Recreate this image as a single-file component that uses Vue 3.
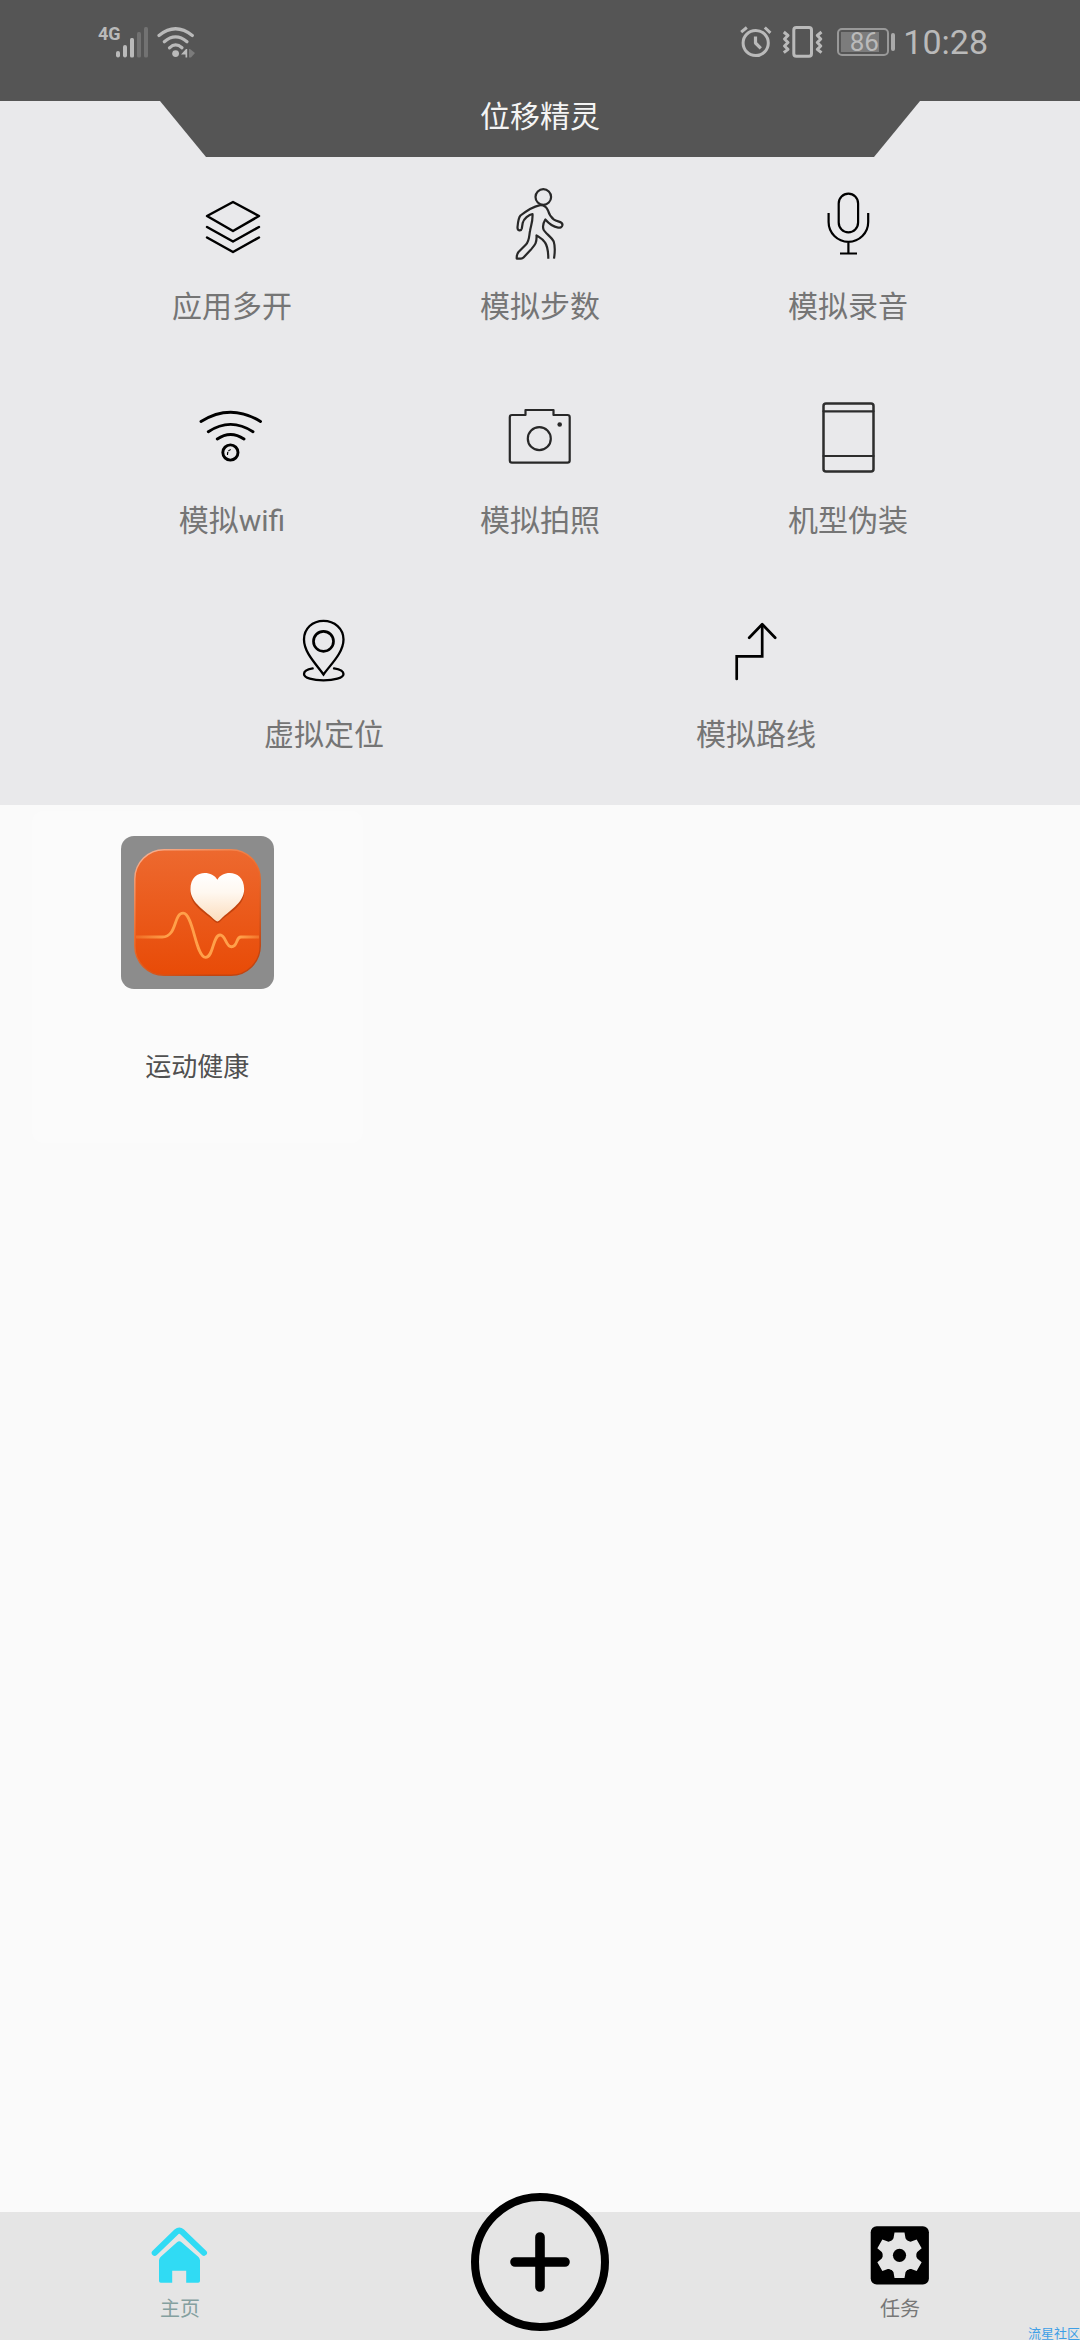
<script setup>
const rows = [
  [
    { id: 'layers', label: '应用多开' },
    { id: 'walk', label: '模拟步数' },
    { id: 'mic', label: '模拟录音' },
  ],
  [
    { id: 'wifi', label: '模拟wifi' },
    { id: 'camera', label: '模拟拍照' },
    { id: 'phone', label: '机型伪装' },
  ],
  [
    { id: 'pin', label: '虚拟定位' },
    { id: 'route', label: '模拟路线' },
  ],
]
const gearTeeth = [0, 60, 120, 180, 240, 300]
</script>

<template>
  <div class="page">
    <header class="top">
      <div class="status">
        <span class="network">4G</span>
        <svg class="signal" width="34" height="36" viewBox="116 24 34 36" aria-hidden="true">
          <g fill="#bababa">
            <rect x="116" y="51" width="4" height="6.500" rx="2" />
            <rect x="123" y="45" width="4" height="12.500" rx="2" />
            <rect x="130" y="38" width="4" height="19.500" rx="1.500" />
          </g>
          <g fill="#727272">
            <rect x="137" y="32" width="4" height="25.500" rx="1.500" />
            <rect x="144" y="27" width="4" height="30.500" rx="1.500" />
          </g>
        </svg>
        <svg width="42" height="36" viewBox="155 24 42 36" aria-hidden="true">
          <g fill="none" stroke="#bababa" stroke-width="3.200" stroke-linecap="round">
            <path d="M159 35.500Q175.500 22 192.300 35.500" />
            <path d="M164.300 41.800Q175.500 32 187 41.800" />
            <path d="M169.500 47.800Q175.600 42 182 47.800" />
          </g>
          <circle cx="175.600" cy="53.600" r="3.400" fill="#bababa" />
          <path d="M181 54.500l5-5.500h1.200v8.500h-1.700v-3z" fill="#bababa" />
          <path d="M189 49h1l5 4-4 4.500h-2z" fill="#7b7b7b" />
        </svg>

        <div class="status-right">
          <svg width="34" height="36" viewBox="740 24 34 36" aria-hidden="true">
            <g fill="none" stroke="#bababa" stroke-width="3">
              <circle cx="755.700" cy="43" r="12.600" />
              <path d="M755.500 36.500v6.500l5.300 5.300" stroke-width="3.200" stroke-linejoin="round" />
              <path d="M741.200 32.200l5.600-4.700M764.800 27.500l5.600 5.300" />
            </g>
          </svg>
          <svg class="vibrate" width="42" height="36" viewBox="782 24 42 36" aria-hidden="true">
            <g fill="none" stroke="#bababa" stroke-width="3" stroke-linejoin="round">
              <rect x="793.800" y="27.500" width="17.700" height="28.700" rx="2.500" />
              <path d="M783.800 32l4.200 3.500-3.500 3.500 3.500 3.500-3.500 3.500 3.500 3.300-4.200 3.400" />
              <path d="M821.500 32l-4.200 3.500 3.500 3.500-3.500 3.500 3.500 3.500-3.500 3.300 4.200 3.400" />
            </g>
          </svg>
          <span class="battery">86</span>
          <span class="nub"></span>
          <time class="clock">10:28</time>
        </div>
      </div>
    </header>

    <section class="panel">
      <h1 class="title">位移精灵</h1>
      <div v-for="(row, i) in rows" :key="i" class="row" :class="{ pair: row.length === 2 }">
        <button v-for="item in row" :key="item.id" type="button" class="feature">
          <svg
            width="84"
            height="84"
            viewBox="0 0 84 84"
            fill="none"
            stroke="#000"
            stroke-width="2.500"
            stroke-linecap="round"
            stroke-linejoin="round"
            aria-hidden="true"
          >
            <g v-if="item.id === 'layers'">
              <path d="M43 21L69 35 43 50 17 35zM17 46l26 14.500L69 46M17 56.500L43 71l26-14.500" />
            </g>
            <g v-else-if="item.id === 'walk'" stroke="#282828" stroke-width="2.200">
              <circle cx="45.300" cy="16" r="7.800" />
              <path
                stroke-linecap="butt"
                d="M50.300 77.700C50.300 70 49.500 65 47 61.500C44.500 57.500 41 56 38.500 54.300C39 62 37 64 33 68.500L25.500 76.500Q24.500 77.600 23 77.600H18.700C18.700 74.500 18.500 73.500 20.500 71L28 63.500C31.500 60 31 55 32 50C33 44 35 40 34.500 33C31 33.500 25.500 38 24.700 42L23.800 47.500C23 50.500 19.500 50 19.500 46.500C19.800 43 20 37.500 22.500 34.500C27 31 35 25.500 41.300 24.300C45.500 23.600 48.500 26 50 29.500C51 33 52.500 36 56 38.700C59.500 41 64.700 40.300 64.500 44C64 48.500 57 46.300 53.500 44C50.500 42 49 40.500 47.300 38.500C45.500 41.500 44.500 45.500 45.500 48.500C46.500 51.500 54 56.500 55.700 60.500C57 64.500 57 71 56 77.700"
              />
            </g>
            <g v-else-if="item.id === 'mic'" stroke-width="2.200" stroke-linecap="butt">
              <rect x="32.700" y="12.700" width="19.400" height="38.600" rx="9.700" />
              <path d="M22.600 32v9a19.800 19.800 0 0 0 39.600 0v-9M42.400 61v11.500M34 72.500h17" />
            </g>
            <g v-else-if="item.id === 'wifi'" stroke-width="2.900">
              <path d="M11 26.500Q40.500 8 70.500 26.500M18.300 36.700Q40.500 22 63 36.700M27.300 44Q40.500 35 54 44" />
              <circle cx="40.400" cy="57.500" r="7.600" />
              <path d="M37.500 59.500q0-5 5-5" stroke-width="1.200" stroke-dasharray="2 2" />
            </g>
            <g v-else-if="item.id === 'camera'" stroke="#282828" stroke-width="2.200">
              <path d="M14 20h13.500v-5h28v5H69.500q2.200 0 2.200 2.200V65.500q0 2.200-2.200 2.200H14q-2.200 0-2.200-2.200V22.200Q11.800 20 14 20z" />
              <circle cx="41.300" cy="43.700" r="11.500" />
              <circle cx="61.700" cy="29.500" r="2.300" fill="#282828" stroke="none" />
            </g>
            <g v-else-if="item.id === 'phone'" stroke="#2d2d2d" stroke-width="2.500">
              <rect x="17.500" y="8.500" width="50" height="68" rx="2.500" />
              <path d="M17.500 16.300h50M17.500 61h50" stroke-width="2.200" />
            </g>
            <g v-else-if="item.id === 'pin'" stroke-width="2.300">
              <path
                stroke-linejoin="miter"
                d="M41.500 65.500C35 56 22 44 22 30.500C22 19.500 30.500 11.800 41.500 11.800S61.500 19.500 61.500 30.500C61.500 44 48 56 41.500 65.500z"
              />
              <circle cx="41.500" cy="32.300" r="10" stroke-width="2.700" />
              <path d="M30.700 59.400C25 60.300 22 62.500 22 65C22 69 31 71.400 41.500 71.400S61.500 69 61.500 65C61.500 62.500 58 60.300 52 59.400" />
            </g>
            <g v-else stroke-width="2.700">
              <path stroke-linejoin="miter" d="M48.200 16v31.400H22.700V70" />
              <path d="M35.200 28.700l13-13.500 13 13.500" />
            </g>
          </svg>
          <span class="feature-label">{{ item.label }}</span>
        </button>
      </div>
    </section>

    <main class="apps">
      <button type="button" class="app">
        <span class="app-tile">
          <svg width="127" height="127" viewBox="0 0 126 126" aria-hidden="true">
            <defs>
              <linearGradient id="tile" x1="0" y1="0" x2="0" y2="1">
                <stop offset="0" stop-color="#ed692f" />
                <stop offset="1" stop-color="#e84b07" />
              </linearGradient>
              <linearGradient id="edge" x1="0" y1="0" x2="0.600" y2="1">
                <stop offset="0" stop-color="#f7b79c" />
                <stop offset="0.500" stop-color="#f0702f" />
                <stop offset="1" stop-color="#c24410" />
              </linearGradient>
              <linearGradient id="heart" x1="0" y1="0" x2="0" y2="1">
                <stop offset="0" stop-color="#ffffff" />
                <stop offset="0.400" stop-color="#fff8f0" />
                <stop offset="1" stop-color="#fbdcbc" />
              </linearGradient>
              <linearGradient id="pulse" gradientUnits="userSpaceOnUse" x1="2" y1="0" x2="124" y2="0">
                <stop offset="0" stop-color="#ffa04a" stop-opacity="0.300" />
                <stop offset="0.250" stop-color="#ffa04a" />
                <stop offset="0.850" stop-color="#ffa04a" />
                <stop offset="1" stop-color="#ffa04a" stop-opacity="0.400" />
              </linearGradient>
            </defs>
            <rect x="0.800" y="0.800" width="124.400" height="124.400" rx="29" fill="url(#tile)" stroke="url(#edge)" stroke-width="1.400" />
            <path
              d="M82.700 32.500C78 24 56 22 56 43C56 57 72 64 80.500 72.500Q82.700 74.500 85 72.500C93 64 109.300 57 109.300 43C109.300 24 87 24 82.700 32.500z"
              fill="#a93305"
              opacity="0.600"
            />
            <path
              d="M82.700 30.500C77 20.500 56 20.500 56 40C56 54 72 62 80.500 70.800Q82.700 73 85 70.800C93 62 109.300 54 109.300 40C109.300 20.500 88 20.500 82.700 30.500z"
              fill="url(#heart)"
            />
            <path
              d="M2 87.300H28C43 87.300 39 63.700 48.700 63.700C59 63.700 61 107.500 71 107.500C79 107.500 78 85.300 85.500 85.300C91 85.300 91 97 96.700 97C103 97 101 87.300 106 87.300H124"
              fill="none"
              stroke="url(#pulse)"
              stroke-width="2.800"
            />
          </svg>
        </span>
        <span class="app-name">运动健康</span>
      </button>
    </main>

    <nav class="tabs">
      <button type="button" class="tab active">
        <svg width="60" height="60" viewBox="0 0 60 60" aria-hidden="true">
          <path d="M4.700 27.800L26.500 6.800Q29.300 4.300 32 6.800L54 27.800" fill="none" stroke="#30dbf4" stroke-width="6" stroke-linecap="round" />
          <path
            d="M27 17.200Q29.300 15.200 31.500 17.200L48.500 32Q50 33.500 50 35.500V56Q50 57.800 48.200 57.800H36.200V45.700H22.200V57.800H10.800Q9 57.800 9 56V35.500Q9 33.500 10.500 32z"
            fill="#30dbf4"
          />
        </svg>
        <span>主页</span>
      </button>
      <button type="button" class="add" aria-label="添加">
        <svg width="60" height="60" viewBox="0 0 60 60" aria-hidden="true">
          <path d="M30 5v50M5 30h50" stroke="#000" stroke-width="9.600" stroke-linecap="round" />
        </svg>
      </button>
      <button type="button" class="tab">
        <svg width="60" height="60" viewBox="0 0 60 60" aria-hidden="true">
          <rect x="0.700" y="1.300" width="58.200" height="58.200" rx="6" />
          <g transform="translate(29.500 30.300)">
            <circle r="16.800" fill="#e5e5e5" />
            <path
              v-for="a in gearTeeth"
              :key="a"
              :transform="`rotate(${a})`"
              d="M-5-22.700H5L6-17Q7-14.500 10-13H-10Q-7-14.500-6-17z"
              fill="#e5e5e5"
            />
            <circle r="6.600" />
          </g>
        </svg>
        <span>任务</span>
      </button>
      <span class="credit">流星社区</span>
    </nav>
  </div>
</template>

<style>
body {
  margin: 0;
  background: #fafafa;
}
</style>

<style scoped>
.page {
  display: flex;
  flex-direction: column;
  min-height: 100vh;
  font-family: Roboto, 'Noto Sans CJK SC', sans-serif;
  background: #fafafa;
}

button {
  margin: 0;
  padding: 0;
  border: 0;
  background: none;
  color: inherit;
  font: inherit;
}

svg {
  display: block;
  flex: none;
}

.top {
  height: 101px;
  background: #555;
}

.status {
  display: flex;
  align-items: center;
  height: 84px;
  padding: 0 92px 0 98px;
  color: #bababa;
}

.network {
  width: 18px;
  margin-bottom: 16px;
  font-family: 'Liberation Sans Narrow', Roboto, sans-serif;
  font-size: 18px;
  font-weight: 700;
  line-height: 20px;
  white-space: nowrap;
}

.signal {
  margin-right: 5px;
}

.status-right {
  display: flex;
  align-items: center;
  margin-left: auto;
}

.vibrate {
  margin: 0 13px 0 8px;
}

.battery {
  box-sizing: border-box;
  width: 52px;
  height: 28px;
  padding-left: 2px;
  border: 2px solid #999;
  border-radius: 5px;
  background: linear-gradient(#7c7c7c, #7c7c7c) 2px 2px / 38px 20px no-repeat;
  font-size: 26px;
  line-height: 24px;
  text-align: center;
}

.nub {
  width: 4px;
  height: 18px;
  margin: 0 8px 0 2px;
  border-radius: 2px;
  background: #aaa;
}

.clock {
  font-size: 34px;
  line-height: 40px;
}

.panel {
  padding-bottom: 6px;
  background: #e9e9eb;
}

.title {
  height: 56px;
  margin: 0;
  background: #555;
  clip-path: polygon(160px 0, calc(100% - 160px) 0, calc(100% - 206px) 100%, 206px 100%);
  color: #f4f4f4;
  font-size: 30px;
  font-weight: 400;
  line-height: 32px;
  text-align: center;
}

.row {
  display: flex;
  padding: 0 78px;
}

.row.pair {
  padding: 0 10%;
}

.feature {
  display: flex;
  flex: 1;
  flex-direction: column;
  align-items: center;
  gap: 20px;
  padding: 24px 0 42px;
}

.feature-label {
  color: #757575;
  font-size: 30px;
  line-height: 44px;
}

.apps {
  display: grid;
  flex: 1;
  grid-template-columns: repeat(3, 1fr);
  gap: 12px;
  align-content: start;
  padding: 6px 32px;
}

.app {
  display: flex;
  flex-direction: column;
  align-items: center;
  gap: 58px;
  padding: 25px 0 56px;
  border-radius: 12px;
  background: #fbfbfb;
}

.app-tile {
  display: flex;
  align-items: center;
  justify-content: center;
  width: 153px;
  height: 153px;
  border-radius: 13px;
  background: #8c8c8c;
}

.app-name {
  color: #505050;
  font-size: 26px;
  line-height: 40px;
}

.tabs {
  position: relative;
  display: grid;
  grid-template-columns: repeat(3, 1fr);
  justify-items: center;
  align-items: start;
  height: 128px;
  background: #e5e5e5;
}

.tab {
  display: flex;
  flex-direction: column;
  align-items: center;
  gap: 12px;
  padding-top: 13px;
  color: #777;
  font-size: 20px;
  line-height: 24px;
}

.tab.active {
  color: #84a09f;
}

.add {
  display: flex;
  align-items: center;
  justify-content: center;
  box-sizing: border-box;
  width: 138px;
  height: 138px;
  margin-top: -19px;
  border: 8px solid #000;
  border-radius: 50%;
  background: #e5e5e5;
}

.credit {
  position: absolute;
  right: 0;
  bottom: 0;
  color: #3f9fe6;
  font-size: 13px;
  line-height: 13px;
}
</style>
